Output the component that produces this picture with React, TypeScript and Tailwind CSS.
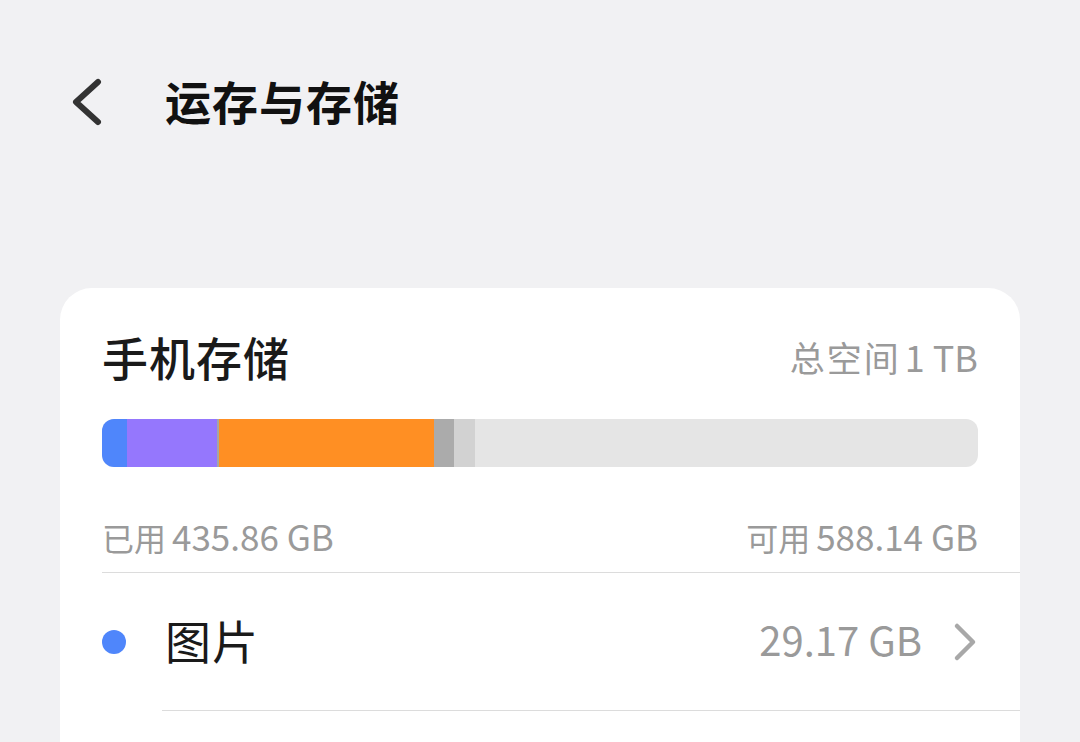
import React from "react";

const segments = [
  { w: 25, color: "bg-[#4f86fb]" },
  { w: 90, color: "bg-[#9577fd]" },
  { w: 2, color: "bg-[#a5a5a5]" },
  { w: 215, color: "bg-[#ff8f23]" },
  { w: 20, color: "bg-[#ababab]" },
  { w: 21, color: "bg-[#d2d2d2]" },
];

const Amount = ({ label, value }: { label: string; value: string }) => (
  <span className="flex items-baseline text-[#9a9a9a]">
    <span className="text-[32px]">{label}</span>
    <span className="text-[35px] ml-[6px]">{value}</span>
  </span>
);

const App = () => {
  return (
    <div className="h-[742px] overflow-hidden bg-[#f1f1f3] font-['Noto_Sans_CJK_SC',sans-serif]">
      <div className="flex h-[206px] items-center pb-[6px] pl-[70px]">
        <svg className="mt-[4px]" width="34" height="48" viewBox="0 0 34 48" fill="none">
          <path
            d="M28 4 L6 24 L28 44"
            stroke="#333333"
            strokeWidth="6"
            strokeLinecap="round"
            strokeLinejoin="round"
          />
        </svg>
        <h1 className="ml-[61px] text-[46px] font-bold leading-none tracking-[1px] text-[#111111]">
          运存与存储
        </h1>
      </div>

      <div className="mx-[60px] mt-[82px] rounded-[32px] bg-white px-[42px] pb-[40px] pt-[42px]">
        <div className="flex h-[52px] items-center justify-between">
          <span className="text-[46px] font-medium leading-none tracking-[1px] text-[#1a1a1a]">
            手机存储
          </span>
          <span className="flex items-baseline text-[#9a9a9a]">
            <span className="text-[35px] tracking-[2px]">总空间</span>
            <span className="ml-[4px] text-[36px]">1 TB</span>
          </span>
        </div>

        <div className="mt-[37px] flex h-[48px] overflow-hidden rounded-[12px] bg-[#e5e5e5]">
          {segments.map((s, i) => (
            <div key={i} className={`h-full shrink-0 ${s.color}`} style={{ width: s.w }} />
          ))}
        </div>

        <div className="mt-[48px] flex h-[40px] items-center justify-between leading-none">
          <Amount label="已用" value="435.86 GB" />
          <Amount label="可用" value="588.14 GB" />
        </div>

        <div className="-mr-[42px] mt-[17px] h-px bg-[#dcdcdc]" />

        <div className="flex h-[137px] items-center pb-[6px]">
          <span className="mt-[6px] h-[24px] w-[24px] rounded-full bg-[#4f86fb]" />
          <span className="ml-[39px] text-[46px] leading-none tracking-[1px] text-[#1a1a1a]">图片</span>
          <span className="ml-auto text-[40px] leading-none text-[#9a9a9a]">29.17 GB</span>
          <svg className="ml-[30px] mt-[6px]" width="26" height="40" viewBox="0 0 26 40" fill="none">
            <path
              d="M5 4 L21 20 L5 36"
              stroke="#a8a8a8"
              strokeWidth="4.5"
              strokeLinecap="round"
              strokeLinejoin="round"
            />
          </svg>
        </div>

        <div className="-mr-[42px] ml-[60px] h-px bg-[#dcdcdc]" />
        <div className="h-[120px]" />
      </div>
    </div>
  );
};

export default App;
